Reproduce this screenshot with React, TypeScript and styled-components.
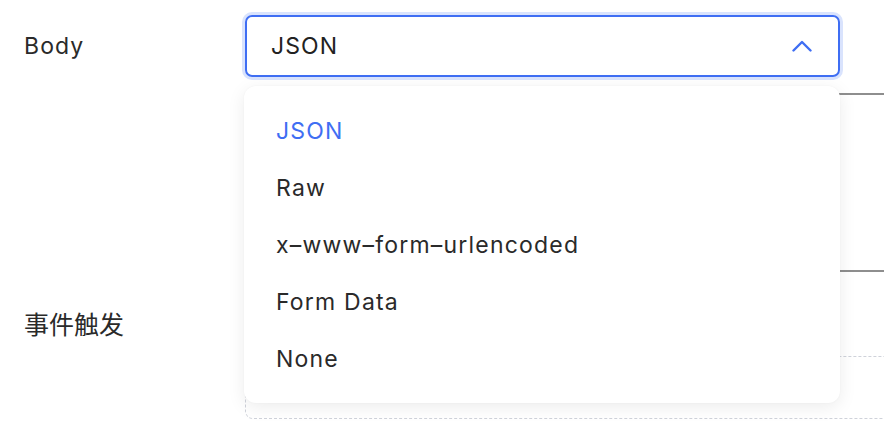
import React from "react";
import styled, { createGlobalStyle } from "styled-components";

const Global = createGlobalStyle`
  html, body { margin: 0; padding: 0; background: #fff; overflow: hidden; }
  body { font-family: Inter, "Noto Sans CJK SC", sans-serif; color: #1f1f1f; }
`;

const Page = styled.div`
  width: 884px;
  height: 431px;
  overflow: hidden;
  padding-left: 24px;
  box-sizing: border-box;
  display: flex;
  flex-direction: column;
`;

const Row = styled.div<{ $top: number }>`
  display: grid;
  grid-template-columns: 221px 700px;
  padding-top: ${(p) => p.$top}px;
`;

const Label = styled.div<{ $pt: number; $cjk?: boolean }>`
  font-size: ${(p) => (p.$cjk ? 25 : 23)}px;
  letter-spacing: ${(p) => (p.$cjk ? 0 : 1.1)}px;
  line-height: 30px;
  color: #2a2a2a;
  padding-top: ${(p) => p.$pt}px;
`;

const Field = styled.div`
  display: flex;
  flex-direction: column;
`;

const SelectWrap = styled.div`
  position: relative;
  width: 595px;
`;

const SelectBox = styled.div`
  height: 62px;
  box-sizing: border-box;
  border: 2px solid #3f6ef3;
  border-radius: 7px;
  box-shadow: 0 0 0 3px #d9e3fd;
  display: flex;
  align-items: center;
  justify-content: space-between;
  padding: 0 26px 0 24px;
  font-size: 23px;
  letter-spacing: 1.1px;
  color: #222;
`;

const Menu = styled.div`
  position: absolute;
  top: 71px;
  left: -1px;
  width: 596px;
  box-sizing: border-box;
  padding: 16px 0;
  background: #fff;
  border-radius: 12px;
  box-shadow: 0 4px 18px rgba(0, 0, 0, 0.08), 0 0 2px rgba(0, 0, 0, 0.04);
  z-index: 10;
`;

const Option = styled.div<{ $active?: boolean }>`
  height: 57px;
  display: flex;
  align-items: center;
  padding-left: 32px;
  font-size: 23px;
  letter-spacing: 1.2px;
  color: ${(p) => (p.$active ? "#3f6ef3" : "#2a2a2a")};
`;

const Editor = styled.div`
  margin-top: 16px;
  height: 179px;
  box-sizing: border-box;
  border-top: 2px solid #8e8e8e;
  border-bottom: 2px solid #8e8e8e;
`;

const Spacer = styled.div`
  height: 84px;
`;

const DashedBox = styled.div`
  height: 63px;
  border: 1.5px dashed #cfd2da;
  border-radius: 8px;
  box-sizing: border-box;
`;

const Chevron = () => (
  <svg width="20" height="12" viewBox="0 0 20 12" fill="none">
    <path d="M1.5 10.5L10 2L18.5 10.5" stroke="#3f6ef3" strokeWidth="2.4" strokeLinecap="round" strokeLinejoin="round" />
  </svg>
);

const options = ["JSON", "Raw", "x\u2013www\u2013form\u2013urlencoded", "Form Data", "None"];

export default function App() {
  return (
    <>
      <Global />
      <Page>
        <Row $top={15}>
          <Label $pt={16}>Body</Label>
          <Field>
            <SelectWrap>
              <SelectBox>
                <span>JSON</span>
                <Chevron />
              </SelectBox>
              <Menu>
                {options.map((o, i) => (
                  <Option key={o} $active={i === 0}>
                    {o}
                  </Option>
                ))}
              </Menu>
            </SelectWrap>
            <Editor />
          </Field>
        </Row>
        <Row $top={0}>
          <Label $pt={38} $cjk>事件触发</Label>
          <Field>
            <Spacer />
            <DashedBox />
          </Field>
        </Row>
      </Page>
    </>
  );
}
